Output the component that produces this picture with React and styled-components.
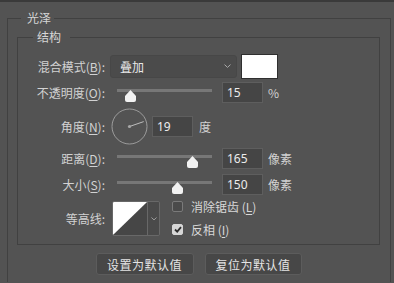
import React from 'react';
import styled, { createGlobalStyle } from 'styled-components';

const GlobalStyle = createGlobalStyle`
html, body {
    margin: 0;
    padding: 0;
    background: #535353;
    overflow: hidden;
}
body {
    font-family: "Noto Sans CJK SC", "Noto Sans", sans-serif;
    font-size: 12px;
    color: #cfcfcf;
}
`;

const TopEdge = styled.div`
height: 2px;
background: #3a3a3a;
`;

// the outer group runs on below the visible area, so no bottom edge
const Outer = styled.fieldset`
box-sizing: border-box;
width: 384px;
height: 272px;
margin: 8px 0 0 7px;
padding: 0 10px 0 9px;
min-width: 0;
border: 1px solid #414141;
border-bottom: none;
`;

const Legend = styled.legend`
margin-left: ${({ offset }) => offset}px;
padding: 0 ${({ right }) => right}px 0 ${({ left }) => left}px;
line-height: 16px;
font-size: 12px;
color: #d6d6d6;
`;

const Inner = styled.fieldset`
box-sizing: border-box;
width: 363px;
margin: 3px 0 0 0;
padding: 0 0 8px 0;
min-width: 0;
border: 1px solid #414141;
`;

const Row = styled.div`
display: flex;
align-items: center;
height: ${({ h }) => h}px;
margin-top: ${({ top }) => top}px;
`;

const Label = styled.div`
width: 87px;
flex: none;
text-align: right;
white-space: nowrap;
color: #d2d2d2;
margin-right: ${({ gap }) => gap}px;

u {
    text-underline-offset: 2px;
}
`;

const Select = styled.div`
box-sizing: border-box;
width: 127px;
height: 23px;
display: flex;
align-items: center;
justify-content: space-between;
padding: 0 5px 0 9px;
background: #4b4b4b;
border: 1px solid #474747;
border-radius: 3px;
color: #e8e8e8;
`;

const Swatch = styled.div`
box-sizing: border-box;
width: 37px;
height: 25px;
margin-left: 4px;
background: #ffffff;
border: 1px solid #2f2f2f;
`;

const SliderBox = styled.div`
position: relative;
width: 95px;
height: 20px;
flex: none;
`;

const Track = styled.div`
margin-top: 6px;
height: 3px;
background: #777777;
`;

const Thumb = styled.svg`
position: absolute;
top: 7px;
margin-left: -5px;
`;

const NumInput = styled.div`
box-sizing: border-box;
width: 41px;
height: 21px;
margin-left: ${({ gap }) => gap}px;
padding: 0 4px;
display: flex;
align-items: center;
background: #454545;
border: 1px solid #5e5e5e;
font-family: "Noto Sans", sans-serif;
font-size: 12px;
color: #ececec;
`;

const Unit = styled.span`
margin-left: ${({ gap }) => gap}px;
color: #d2d2d2;
`;

const Dial = styled.svg`
flex: none;
`;

const Contour = styled.div`
box-sizing: border-box;
display: flex;
height: 35px;
border: 1px solid #686868;
border-radius: 2px;
overflow: hidden;
`;

const ContourPreview = styled.svg`
display: block;
`;

const ContourArrow = styled.div`
width: 11px;
display: flex;
align-items: center;
justify-content: center;
background: #4a4a4a;
border-left: 1px solid #686868;
`;

const Checks = styled.div`
display: flex;
flex-direction: column;
gap: 6px;
margin-left: 12px;
margin-top: -2px;
`;

const CheckRow = styled.label`
display: flex;
align-items: center;
gap: 8px;
color: #d8d8d8;
white-space: nowrap;

u {
    text-underline-offset: 2px;
}
`;

const Box = styled.span`
box-sizing: border-box;
width: 11px;
height: 11px;
display: flex;
align-items: center;
justify-content: center;
border-radius: 2px;
border: 1px solid ${({ checked }) => (checked ? '#d6d6d6' : '#7a7a7a')};
background: ${({ checked }) => (checked ? '#d6d6d6' : '#4a4a4a')};
`;

const Buttons = styled.div`
display: flex;
justify-content: center;
gap: 11px;
margin-top: 8px;
`;

const Button = styled.button`
box-sizing: border-box;
width: ${({ w }) => w}px;
height: 22px;
padding: 0;
background: #474747;
border: 1px solid #5c5c5c;
border-radius: 3px;
font-family: "Noto Sans CJK SC", sans-serif;
font-size: 12px;
letter-spacing: 0.5px;
color: #e4e4e4;
`;

const Chevron = ({ size = 7 }) => (
    <svg width={size} height={size * 0.6} viewBox="0 0 7 4">
        <path d="M0.5 0.5 L3.5 3.3 L6.5 0.5" fill="none" stroke="#a8a8a8" strokeWidth="1" />
    </svg>
);

const Slider = ({ pos }) => (
    <SliderBox>
        <Track />
        <Thumb width="11" height="12" viewBox="0 0 11 12" style={{ left: `${pos}%` }}>
            <path d="M5.5 0 L11 6 L11 10 Q11 12 9 12 L2 12 Q0 12 0 10 L0 6 Z" fill="#f2f2f2" />
        </Thumb>
    </SliderBox>
);

const AngleDial = ({ angle }) => {
    const r = Math.PI * angle / 180;
    const x = 18 + 15 * Math.cos(r);
    const y = 18 - 15 * Math.sin(r);

    return (
        <Dial width="37" height="37" viewBox="0 0 37 37">
            <circle cx="18.5" cy="18.5" r="17.5" fill="none" stroke="#9c9c9c" strokeWidth="1" />
            <line x1="18.5" y1="18.5" x2={x + 0.5} y2={y + 0.5} stroke="#bdbdbd" strokeWidth="1" />
            <circle cx="18.5" cy="18.5" r="1.6" fill="#a8a8a8" />
        </Dial>
    );
};

export default function App() {
    return (
        <>
            <GlobalStyle />
            <TopEdge />
            <Outer>
                <Legend offset={4} left={6} right={3}>光泽</Legend>
                <Inner>
                    <Legend offset={15} left={4} right={9}>结构</Legend>

                    <Row h={26} top={8}>
                        <Label gap={5}>混合模式(<u>B</u>):</Label>
                        <Select>
                            <span>叠加</span>
                            <Chevron />
                        </Select>
                        <Swatch />
                    </Row>

                    <Row h={21} top={3}>
                        <Label gap={12}>不透明度(<u>O</u>):</Label>
                        <Slider pos={14} />
                        <NumInput gap={10}>15</NumInput>
                        <Unit gap={5}>%</Unit>
                    </Row>

                    <Row h={37} top={5}>
                        <Label gap={6}>角度(<u>N</u>):</Label>
                        <AngleDial angle={19} />
                        <NumInput gap={4}>19</NumInput>
                        <Unit gap={6}>度</Unit>
                    </Row>

                    <Row h={21} top={3}>
                        <Label gap={12}>距离(<u>D</u>):</Label>
                        <Slider pos={79} />
                        <NumInput gap={10}>165</NumInput>
                        <Unit gap={5}>像素</Unit>
                    </Row>

                    <Row h={21} top={5}>
                        <Label gap={12}>大小(<u>S</u>):</Label>
                        <Slider pos={63} />
                        <NumInput gap={10}>150</NumInput>
                        <Unit gap={5}>像素</Unit>
                    </Row>

                    <Row h={35} top={6}>
                        <Label gap={7}>等高线:</Label>
                        <Contour>
                            <ContourPreview width="34" height="33" viewBox="0 0 34 33">
                                <rect width="34" height="33" fill="#464646" />
                                <path d="M0 0 L34 0 L0 33 Z" fill="#ffffff" />
                            </ContourPreview>
                            <ContourArrow>
                                <Chevron size={6} />
                            </ContourArrow>
                        </Contour>
                        <Checks>
                            <CheckRow>
                                <Box />
                                <span>消除锯齿 (<u>L</u>)</span>
                            </CheckRow>
                            <CheckRow>
                                <Box checked>
                                    <svg width="8" height="7" viewBox="0 0 8 7">
                                        <path d="M1 3.5 L3.2 5.6 L7 1.2" fill="none" stroke="#2e2e2e" strokeWidth="1.8" />
                                    </svg>
                                </Box>
                                <span>反相 (<u>I</u>)</span>
                            </CheckRow>
                        </Checks>
                    </Row>
                </Inner>
                <Buttons>
                    <Button w={98}>设置为默认值</Button>
                    <Button w={97}>复位为默认值</Button>
                </Buttons>
            </Outer>
        </>
    );
}
